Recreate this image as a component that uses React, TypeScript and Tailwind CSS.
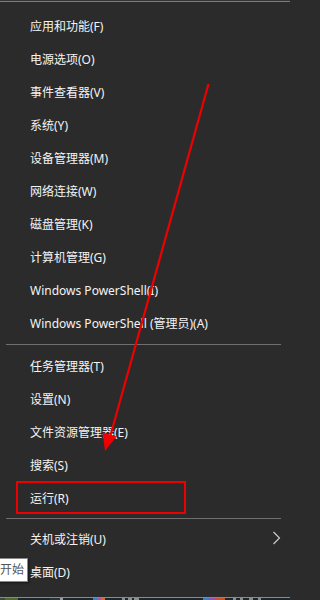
import React from "react";

const font = {
  fontFamily: '"Segoe UI", "Noto Sans", "Noto Sans CJK SC", sans-serif',
};

function Item({ label, chevron }: { label: string; chevron?: boolean }) {
  return (
    <div className="h-[33px] flex items-center pl-[30px] pr-[9px] text-[12px] text-[#f4f4f4] leading-none">
      <span className="flex-1 whitespace-nowrap">{label}</span>
      {chevron && (
        <svg width="9" height="14" viewBox="0 0 9 14" className="mt-[-4px]">
          <path d="M1.5 1 L7.5 7 L1.5 13" fill="none" stroke="#d0d0d0" strokeWidth="1.1" />
        </svg>
      )}
    </div>
  );
}

function Sep({ top, bottom }: { top: string; bottom: string }) {
  return (
    <div className={`flex flex-col ${top} ${bottom}`}>
      <div className="ml-[6px] mr-[9px] h-px bg-[#6f6f6f]" />
    </div>
  );
}

export default function App() {
  const g1 = [
    "应用和功能(F)",
    "电源选项(O)",
    "事件查看器(V)",
    "系统(Y)",
    "设备管理器(M)",
    "网络连接(W)",
    "磁盘管理(K)",
    "计算机管理(G)",
    "Windows PowerShell(I)",
    "Windows PowerShell (管理员)(A)",
  ];
  const g2 = ["任务管理器(T)", "设置(N)", "文件资源管理器(E)", "搜索(S)", "运行(R)"];
  return (
    <div className="w-full min-h-[600px] bg-[#2b2b2b]">
      <div className="relative w-[290px] h-[600px] overflow-hidden bg-[#2b2b2b]" style={font}>
        <div className="h-px bg-[#333333]" />
        <div className="h-px bg-[#7c7c7c]" />
        <div className="flex flex-col pt-[8px]">
          {g1.map((l) => (
            <Item key={l} label={l} />
          ))}
          <Sep top="pt-[4px]" bottom="pb-[5px]" />
          {g2.map((l) => (
            <Item key={l} label={l} />
          ))}
          <Sep top="pt-[3px]" bottom="pb-[4px]" />
          <Item label="关机或注销(U)" chevron />
          <Item label="桌面(D)" />
        </div>

        {/* red highlight box */}
        <div className="absolute left-[16px] top-[481px] w-[170px] h-[33px] border-2 border-[#ee0000]" />

        {/* arrow */}
        <svg className="absolute left-0 top-0" width="290" height="600" viewBox="0 0 290 600">
          <line x1="208.5" y1="84" x2="110" y2="437" stroke="#ee0000" strokeWidth="2.2" />
          <polygon points="105,451 116.5,436.5 102.5,432.5" fill="#ee0000" />
        </svg>

        {/* tooltip */}
        <div className="absolute left-[-4px] top-[558px] w-[32px] h-[24px] bg-white border border-[#8a8a8a] shadow-[1px_1px_2px_rgba(0,0,0,0.5)] flex items-center pl-[3px] text-[12px] text-[#555555] leading-none">
          开始
        </div>

        {/* taskbar strip */}
        <div className="absolute left-0 bottom-0 w-[290px] flex flex-col">
          <div className="h-px bg-[#8a8a8a]" />
          <div className="h-[2px] flex bg-[#1c262b]">
            <div className="w-[5px] bg-[#3c4a3a]" />
            <div className="w-[13px] bg-[#4f6b2e]" />
            <div className="w-[32px]" />
            <div className="w-[10px] bg-[#2a3338]" />
            <div className="w-[3px] bg-[#9aa0a3]" />
            <div className="w-[30px]" />
            <div className="w-[4px] bg-[#3b7fc4]" />
            <div className="w-[4px] bg-[#b04fa0]" />
            <div className="w-[4px] bg-[#d06a3a]" />
            <div className="w-[17px]" />
            <div className="w-[3px] bg-[#8a8f92]" />
            <div className="w-[3px]" />
            <div className="w-[4px] bg-[#8a8f92]" />
            <div className="w-[2px]" />
            <div className="w-[5px] bg-[#8a8f92]" />
            <div className="w-[64px]" />
            <div className="w-[6px] bg-[#3b7fc4]" />
            <div className="w-[6px] bg-[#9a4fb0]" />
            <div className="w-[10px] bg-[#c8502a]" />
            <div className="w-[8px]" />
            <div className="w-[3px] bg-[#8a8f92]" />
            <div className="w-[4px]" />
            <div className="w-[3px] bg-[#8a8f92]" />
            <div className="w-[6px]" />
            <div className="w-[4px] bg-[#8a8f92]" />
            <div className="w-[5px]" />
            <div className="w-[3px] bg-[#8a8f92]" />
          </div>
        </div>
      </div>
    </div>
  );
}
